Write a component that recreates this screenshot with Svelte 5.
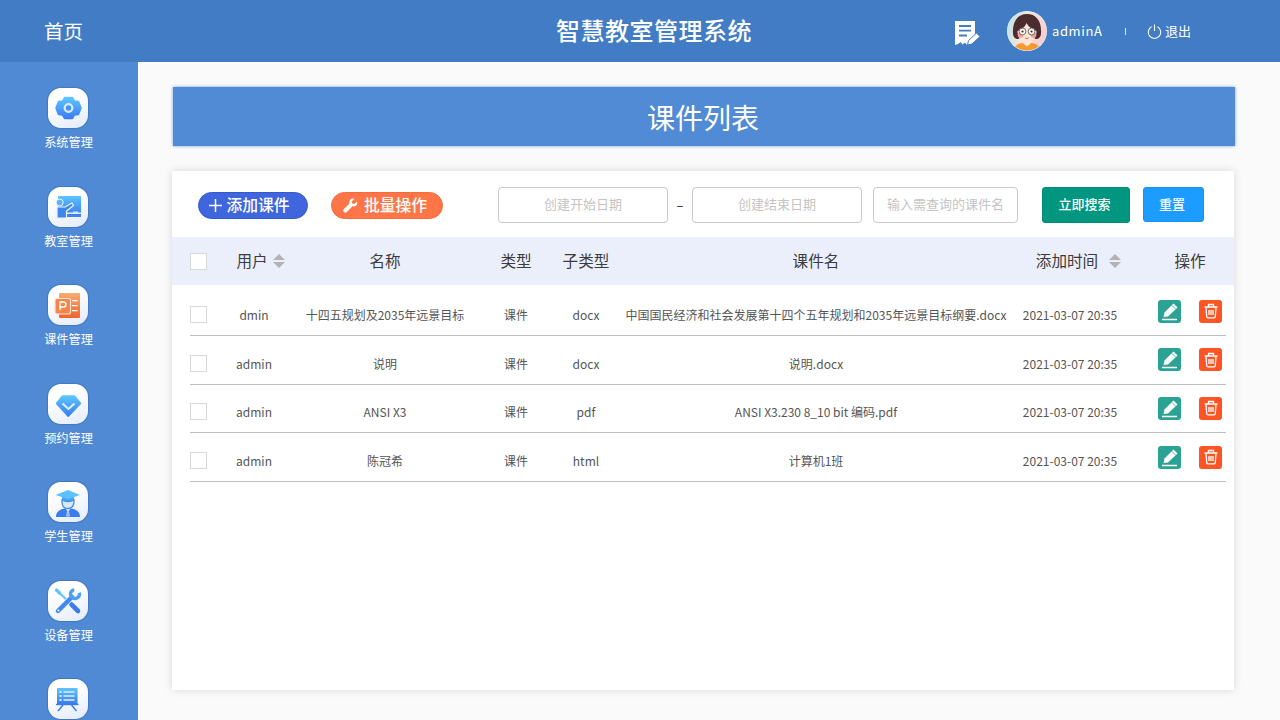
<script>
  const menus = [
    { name: '系统管理', icon: 'gear' },
    { name: '教室管理', icon: 'room' },
    { name: '课件管理', icon: 'ppt' },
    { name: '预约管理', icon: 'gem' },
    { name: '学生管理', icon: 'student' },
    { name: '设备管理', icon: 'tools' },
    { name: '', icon: 'board' } // label falls below the window
  ];

  const rows = [
    { user: 'dmin', name: '十四五规划及2035年远景目标', type: '课件', sub: 'docx', file: '中国国民经济和社会发展第十四个五年规划和2035年远景目标纲要.docx', time: '2021-03-07 20:35' },
    { user: 'admin', name: '说明', type: '课件', sub: 'docx', file: '说明.docx', time: '2021-03-07 20:35' },
    { user: 'admin', name: 'ANSI X3', type: '课件', sub: 'pdf', file: 'ANSI X3.230 8_10 bit 编码.pdf', time: '2021-03-07 20:35' },
    { user: 'admin', name: '陈冠希', type: '课件', sub: 'html', file: '计算机1班', time: '2021-03-07 20:35' }
  ];
</script>

<div class="page">
  <header class="top">
    <div class="home">首页</div>
    <h1 class="title">智慧教室管理系统</h1>
    <svg class="note" width="26" height="26" viewBox="0 0 26 26">
      <path d="M0 1h20v14l-8 10-2-2.500-2.500 2-2-2.500L3 24l-3 1z" fill="#fff" />
      <path d="M4 6h12M4 10.700h12M4 15.500h8" stroke="#417cc4" stroke-width="1.800" />
      <path d="M12.500 25l1-4.500 8-7.500 3.500 3.500-8 7.500z" fill="#fff" stroke="#417cc4" stroke-width="1" />
    </svg>
    <svg class="avatar" width="40" height="40" viewBox="0 0 40 40">
      <defs>
        <linearGradient id="av" x1="0" x2="1" y1="0" y2="0.3">
          <stop offset="0" stop-color="#b5e4ec" />
          <stop offset="0.5" stop-color="#f3e3da" />
          <stop offset="1" stop-color="#f6cfd0" />
        </linearGradient>
        <clipPath id="avc"><circle cx="20" cy="20" r="19.500" /></clipPath>
      </defs>
      <circle cx="20" cy="20" r="20" fill="#eef4fb" />
      <g clip-path="url(#avc)">
        <rect width="40" height="40" fill="url(#av)" />
        <path d="M6 23C5 10 11 3 20 3s15 7 14 20c-.5 5-5 6-7 4H13c-2 2-6.500 1-7-4z" fill="#4a2c2e" />
        <path d="M10.500 20c3-1 7-3 9-8 3 5 7 7 10 8 0 7-4 11-9.500 11S10.500 27 10.500 20z" fill="#fbe3d5" />
        <circle cx="13.500" cy="24" r="2.800" fill="#f29a96" />
        <circle cx="26.500" cy="24" r="2.800" fill="#f29a96" />
        <circle cx="15.500" cy="20.500" r="3.400" fill="#fdf2ec" stroke="#666" stroke-width=".9" />
        <circle cx="24.500" cy="20.500" r="3.400" fill="#fdf2ec" stroke="#666" stroke-width=".9" />
        <circle cx="15.500" cy="20.500" r="1.100" fill="#333" />
        <circle cx="24.500" cy="20.500" r="1.100" fill="#333" />
        <path d="M18.300 27q1.700 1.200 3.400 0" fill="none" stroke="#c55" stroke-width=".9" />
        <path d="M7 40c0-6 5-8 9-8l4 3 4-3c4 0 9 2 9 8z" fill="#f59a32" />
        <path d="M16.500 30h7v2.500l-3.500 3-3.500-3z" fill="#fbe3d5" />
      </g>
    </svg>
    <span class="username">adminA</span>
    <span class="sep"></span>
    <svg class="power" width="15" height="15" viewBox="0 0 15 15" fill="none" stroke="#fff" stroke-width="1.100">
      <path d="M4.500 2.800a6.200 6.200 0 1 0 6 0" />
      <path d="M7.500 .5v6.500" />
    </svg>
    <span class="logout">退出</span>
  </header>

  <div class="body">
    <aside class="side">
      {#each menus as m}
        <div class="menu">
          <div class="tile">
            <svg width="30" height="30" viewBox="0 0 30 30">
              <defs>
                <linearGradient id="b-{m.icon}" x1="0" x2="0" y1="0" y2="1">
                  <stop offset="0" stop-color="#5cc6ff" />
                  <stop offset="1" stop-color="#3a7cf0" />
                </linearGradient>
                <linearGradient id="o-{m.icon}" x1="0" x2="0" y1="0" y2="1">
                  <stop offset="0" stop-color="#fbab6e" />
                  <stop offset="1" stop-color="#ef642c" />
                </linearGradient>
              </defs>
              {#if m.icon === 'gear'}
                <path d="M11.500 4.500h8l2 3.500 4 .5 2.500 6.500-2.500 6.500-4 .5-2 3.500h-8l-2-3.500-4-.5L3 15l2.500-6.500 4-.5z" fill="url(#b-gear)" stroke="url(#b-gear)" stroke-width="1.500" stroke-linejoin="round" />
                <circle cx="15.500" cy="15" r="3.800" fill="#4a90f0" stroke="#dbe9fb" stroke-width="2.200" />
              {:else if m.icon === 'room'}
                <rect x="5" y="4" width="23" height="19" fill="url(#b-room)" />
                <path d="M4 15h8l7-4 1.500 2.500-7 5.500v7H4z" fill="#3f86ec" stroke="#eef3fc" stroke-width="1.200" stroke-linejoin="round" />
                <circle cx="6.700" cy="10.500" r="3.500" fill="#5bb4f7" stroke="#eef3fc" stroke-width="1" />
                <rect x="14" y="20.500" width="14" height="1.400" fill="#eef3fc" />
                <rect x="20" y="19.500" width="5" height="1.400" fill="#dbe9fb" />
                <rect x="14" y="23" width="14" height="2" fill="#3f86ec" />
              {:else if m.icon === 'ppt'}
                <rect x="6" y="3" width="21" height="25" rx="1" fill="url(#o-ppt)" />
                <rect x="2" y="8.500" width="15.500" height="15.500" rx="2" fill="#f5854b" stroke="#fde5d8" stroke-width="1.100" />
                <path d="M7 20v-8h3.500a2.500 2.500 0 0 1 0 5H7" fill="none" stroke="#fff" stroke-width="1.400" />
                <path d="M19 10.700h5.500M19 15.700h5.500M19 20.700h5.500" stroke="#fff" stroke-width="1.200" />
              {:else if m.icon === 'gem'}
                <path d="M9.500 7h12l6 7.500-12.300 12.700L3.500 14.500z" fill="url(#b-gem)" stroke="url(#b-gem)" stroke-linejoin="round" stroke-width="1.500" />
                <path d="M9.500 14.500l6 5.500 6-5.500" fill="none" stroke="#e4f0fd" stroke-width="2" />
              {:else if m.icon === 'student'}
                <path d="M9 10h12v4q-6 3-12 0z" fill="#4aa6f5" />
                <path d="M9 13q6 3 12 0q.5 8-6 8.500T9 13z" fill="#dbe9fb" stroke="#3f8eee" stroke-width="1.300" />
                <path d="M2.500 8L15 3l12 5-12 4z" fill="#5cc2ff" />
                <path d="M3 30c0-5.500 4-8 9.500-8.500L15 25l2.500-3.500C23 22 27 24.500 27 30z" fill="#3a7cf0" />
                <path d="M14 24.500h2l.8 5h-3.600z" fill="#dbe9fb" />
                <path d="M15 25.500v4" stroke="#3a7cf0" stroke-width=".9" />
              {:else if m.icon === 'tools'}
                <path d="M4.500 5L18 18" stroke="#5cc6ff" stroke-width="2" />
                <path d="M3.500 4L6.500 7" stroke="#5cc6ff" stroke-width="3.200" stroke-linecap="round" />
                <path d="M18.500 18.500L25 25" stroke="#3a7cf0" stroke-width="4.600" stroke-linecap="round" />
                <path d="M5 25L19 11" stroke="#eef3fc" stroke-width="6" stroke-linecap="round" />
                <path d="M5 25L19 11" stroke="#3f8af0" stroke-width="4.400" stroke-linecap="round" />
                <path d="M26.350 6.800A4.500 4.500 0 1 1 21.200 3.550" fill="none" stroke="#4f9ff6" stroke-width="3.400" />
                <circle cx="5.500" cy="24.500" r="1" fill="#fff" />
              {:else}
                <rect x="4" y="4" width="20.500" height="16" fill="url(#b-board)" />
                <path d="M10.500 8h11M10.500 12h11M10.500 16h11" stroke="#e4f0fd" stroke-width="1.400" />
                <path d="M6.500 8h2M6.500 12h2M6.500 16h2" stroke="#e4f0fd" stroke-width="1.800" />
                <path d="M3 20.500h22.500" stroke="#3a7cf0" stroke-width="1.400" />
                <path d="M10 21l-5 6M18.500 21l5 6" stroke="#3a7cf0" stroke-width="1.500" />
              {/if}
            </svg>
          </div>
          {#if m.name}
            <span class="menu-name">{m.name}</span>
          {/if}
        </div>
      {/each}
    </aside>

    <main class="main">
      <div class="banner">课件列表</div>

      <section class="card">
        <div class="toolbar">
          <button class="pill add">
            <svg width="13" height="13" viewBox="0 0 13 13"><path d="M6.500 0v13M0 6.500h13" stroke="#fff" stroke-width="1.500" /></svg>
            添加课件
          </button>
          <button class="pill batch">
            <svg width="15" height="15" viewBox="0 0 15 15"><path d="M14 3.500l-2.800 2.600-2-.6-.5-2L11.400.7C8.500-.3 5.800 2 6.500 5.400L.9 11a2 2 0 0 0 2.900 2.900l5.600-5.600c3.400.8 5.600-1.900 4.600-4.800z" fill="#fff" /></svg>
            批量操作
          </button>
          <div class="field date first">创建开始日期</div>
          <span class="dash">–</span>
          <div class="field date">创建结束日期</div>
          <div class="field name">输入需查询的课件名</div>
          <button class="btn search">立即搜索</button>
          <button class="btn reset">重置</button>
        </div>

        <div class="grid head">
          <div class="cell"><span class="check"></span></div>
          <div class="cell sorted">用户<i class="sort"></i></div>
          <div class="cell">名称</div>
          <div class="cell">类型</div>
          <div class="cell">子类型</div>
          <div class="cell">课件名</div>
          <div class="cell sorted wide">添加时间<i class="sort far"></i></div>
          <div class="cell ops">操作</div>
        </div>

        <div class="list">
          {#each rows as r}
            <div class="grid row">
              <div class="cell"><span class="check"></span></div>
              <div class="cell">{r.user}</div>
              <div class="cell">{r.name}</div>
              <div class="cell">{r.type}</div>
              <div class="cell">{r.sub}</div>
              <div class="cell">{r.file}</div>
              <div class="cell">{r.time}</div>
              <div class="cell ops actions">
                <span class="act edit">
                  <svg width="23" height="23" viewBox="0 0 23 23">
                    <path d="M5.500 17l1-4.500 9-9 4 4-9.500 9z" fill="#fff" />
                    <path d="M13.800 5.300l4 4" stroke="#2ba394" stroke-width=".8" />
                    <path d="M4 19.500h15" stroke="#fff" stroke-width="1.500" />
                  </svg>
                </span>
                <span class="act del">
                  <svg width="16" height="16" viewBox="0 0 16 16" fill="none" stroke="#fff" stroke-width="1.300">
                    <path d="M1.500 4h13M5.500 4V1.500h5V4M3 4l.7 9.500q.1 1.300 1.300 1.300h6q1.200 0 1.300-1.300L13 4M6 7v5M8 7v5M10 7v5" />
                  </svg>
                </span>
              </div>
            </div>
          {/each}
        </div>
      </section>
    </main>
  </div>
</div>

<style>
  :global(body) {
    margin: 0;
    overflow: hidden;
    font-family: "Noto Sans CJK SC", "Noto Sans", sans-serif;
  }

  .page {
    width: 1280px;
    height: 720px;
    display: flex;
    flex-direction: column;
    overflow: hidden;
    background: #fafafa;
  }

  .top {
    height: 62px;
    flex: none;
    display: flex;
    align-items: center;
    background: #417cc4;
    color: #fff;
  }

  .home {
    width: 94px;
    padding-left: 44px;
    padding-bottom: 2px;
    font-size: 19.5px;
  }

  .title {
    margin: 0 0 0 418px;
    width: 196px;
    padding-bottom: 4px;
    white-space: nowrap;
    font-size: 24px;
    font-weight: 500;
    letter-spacing: 0.5px;
  }

  .note {
    margin-left: 203px;
    margin-top: 4px;
    flex: none;
  }

  .avatar {
    margin-left: 26px;
    flex: none;
  }

  .username {
    margin-left: 5px;
    width: 52px;
    padding-bottom: 2px;
    font-size: 13px;
    letter-spacing: 0.6px;
  }

  .sep {
    margin-left: 21px;
    width: 1px;
    height: 7px;
    background: #dbe7f5;
  }

  .power {
    margin-left: 21px;
    flex: none;
  }

  .logout {
    margin-left: 3px;
    padding-bottom: 2px;
    font-size: 13px;
  }

  .body {
    flex: 1;
    display: flex;
    min-height: 0;
  }

  .side {
    width: 138px;
    flex: none;
    background: #518ad4;
    padding-top: 26.3px;
    overflow: hidden;
  }

  .menu {
    height: 98.5px;
    display: flex;
    flex-direction: column;
    align-items: center;
  }

  .tile {
    width: 40px;
    height: 40px;
    flex: none;
    box-sizing: border-box;
    margin-right: 2px;
    border-radius: 13px;
    background: linear-gradient(160deg, #ffffff 30%, #e3ebfa);
    box-shadow: 0 0 1px 1px #3f78c4;
    display: flex;
    align-items: center;
    justify-content: center;
  }

  .menu-name {
    margin-top: 5px;
    margin-right: 1px;
    font-size: 12.2px;
    line-height: 18px;
    color: #fff;
  }

  .main {
    flex: 1;
    min-width: 0;
    padding: 25px 46px 30px 34px;
    display: flex;
    flex-direction: column;
  }

  .banner {
    height: 59px;
    margin: 0 -1px 25px 1px;
    padding-right: 2px;
    display: flex;
    align-items: center;
    justify-content: center;
    background: #518bd6;
    box-shadow: 0 0 3px rgba(81, 139, 214, 0.8);
    color: #fff;
    font-size: 28px;
  }

  .card {
    flex: 1;
    background: #fff;
    box-shadow: 0 0 8px rgba(0, 0, 0, 0.14);
  }

  .toolbar {
    box-sizing: border-box;
    height: 66px;
    padding: 2px 0 0 26px;
    display: flex;
    align-items: center;
  }

  button {
    font-family: inherit;
    cursor: pointer;
  }

  .pill {
    box-sizing: border-box;
    height: 27px;
    padding: 0 0 2px;
    border-radius: 14px;
    font-size: 15.8px;
    font-weight: 500;
    color: #fff;
    display: flex;
    align-items: center;
    justify-content: center;
    gap: 4px;
    margin-top: 1px;
  }

  .pill svg {
    margin-top: 2px;
  }

  .add {
    width: 110px;
    padding-right: 7px;
    background: #3f66dc;
    border: 1px solid #3259d0;
  }

  .batch {
    width: 112px;
    margin-left: 23px;
    padding-right: 4px;
    gap: 6px;
    background: #fe7647;
    border: 1px solid #f76a3a;
  }

  .field {
    box-sizing: border-box;
    height: 36px;
    padding-bottom: 3px;
    border: 1px solid #c9c9c9;
    border-radius: 4px;
    background: #fff;
    color: #c4c4c4;
    font-size: 13px;
    display: flex;
    align-items: center;
    justify-content: center;
  }

  .date {
    width: 170px;
  }

  .first {
    margin-left: 55px;
  }

  .dash {
    width: 24px;
    padding-bottom: 2px;
    text-align: center;
    font-size: 13px;
    color: #222;
  }

  .name {
    width: 145px;
    margin-left: 11px;
  }

  .btn {
    box-sizing: border-box;
    height: 36px;
    padding: 0 3px 3px 0;
    border-radius: 3px;
    color: #fff;
    font-size: 13px;
    font-weight: 500;
  }

  .search {
    width: 88px;
    margin-left: 24px;
    background: #00967f;
    border: 1px solid #078a76;
  }

  .reset {
    width: 61px;
    height: 35px;
    margin-left: 13px;
    margin-bottom: 1px;
    background: #1c9cff;
    border: 1px solid #1a93f0;
  }

  .grid {
    display: grid;
    grid-template-columns: 24px 80px 182px 80px 60px 400px 108px 102px;
    align-items: center;
    margin-left: 18px;
    width: 1036px;
  }

  .cell {
    text-align: center;
    white-space: nowrap;
    display: flex;
    align-items: center;
    justify-content: center;
  }

  .cell:first-child {
    justify-content: flex-start;
  }

  .ops {
    padding-left: 30px;
  }

  .head {
    box-sizing: border-box;
    height: 48px;
    margin-left: 0;
    padding: 0 0 0 18px;
    width: 1062px;
    grid-template-columns: 24px 80px 182px 80px 60px 400px 108px 102px 8px;
    background: #ebeffb;
    color: #3c3c3c;
    font-size: 15.6px;
  }

  .head .cell {
    padding-bottom: 3px;
  }

  .sorted {
    padding-left: 14px;
    justify-content: center;
  }

  .sorted.wide {
    padding-left: 18px;
  }

  .head .cell:first-child {
    padding-bottom: 0;
  }

  .check {
    box-sizing: border-box;
    width: 17px;
    height: 17px;
    background: #fff;
    border: 1px solid #d9d9d9;
  }

  .sort {
    position: relative;
    width: 13px;
    height: 14px;
    margin-left: 5px;
    margin-top: 3px;
  }

  .sort::before,
  .sort::after {
    content: "";
    position: absolute;
    left: 0;
    border-left: 6.5px solid transparent;
    border-right: 6.5px solid transparent;
  }

  .sort::before {
    top: 0;
    border-bottom: 6px solid #b3b3b3;
  }

  .sort::after {
    bottom: 0;
    border-top: 6px solid #b3b3b3;
  }

  .sort.far {
    margin-left: 11px;
  }

  .list {
    padding-top: 2.3px;
  }

  .row {
    box-sizing: border-box;
    height: 48.67px;
    padding-top: 7px;
    border-bottom: 1px solid #bfbfbf;
    color: #555;
    font-size: 12px;
  }

  .actions {
    gap: 18px;
    margin-top: -7px;
  }

  .act {
    width: 23px;
    height: 23px;
    border-radius: 3px;
    display: flex;
    align-items: center;
    justify-content: center;
  }

  .edit {
    background: #2ba394;
  }

  .del {
    background: #fd5423;
  }
</style>
